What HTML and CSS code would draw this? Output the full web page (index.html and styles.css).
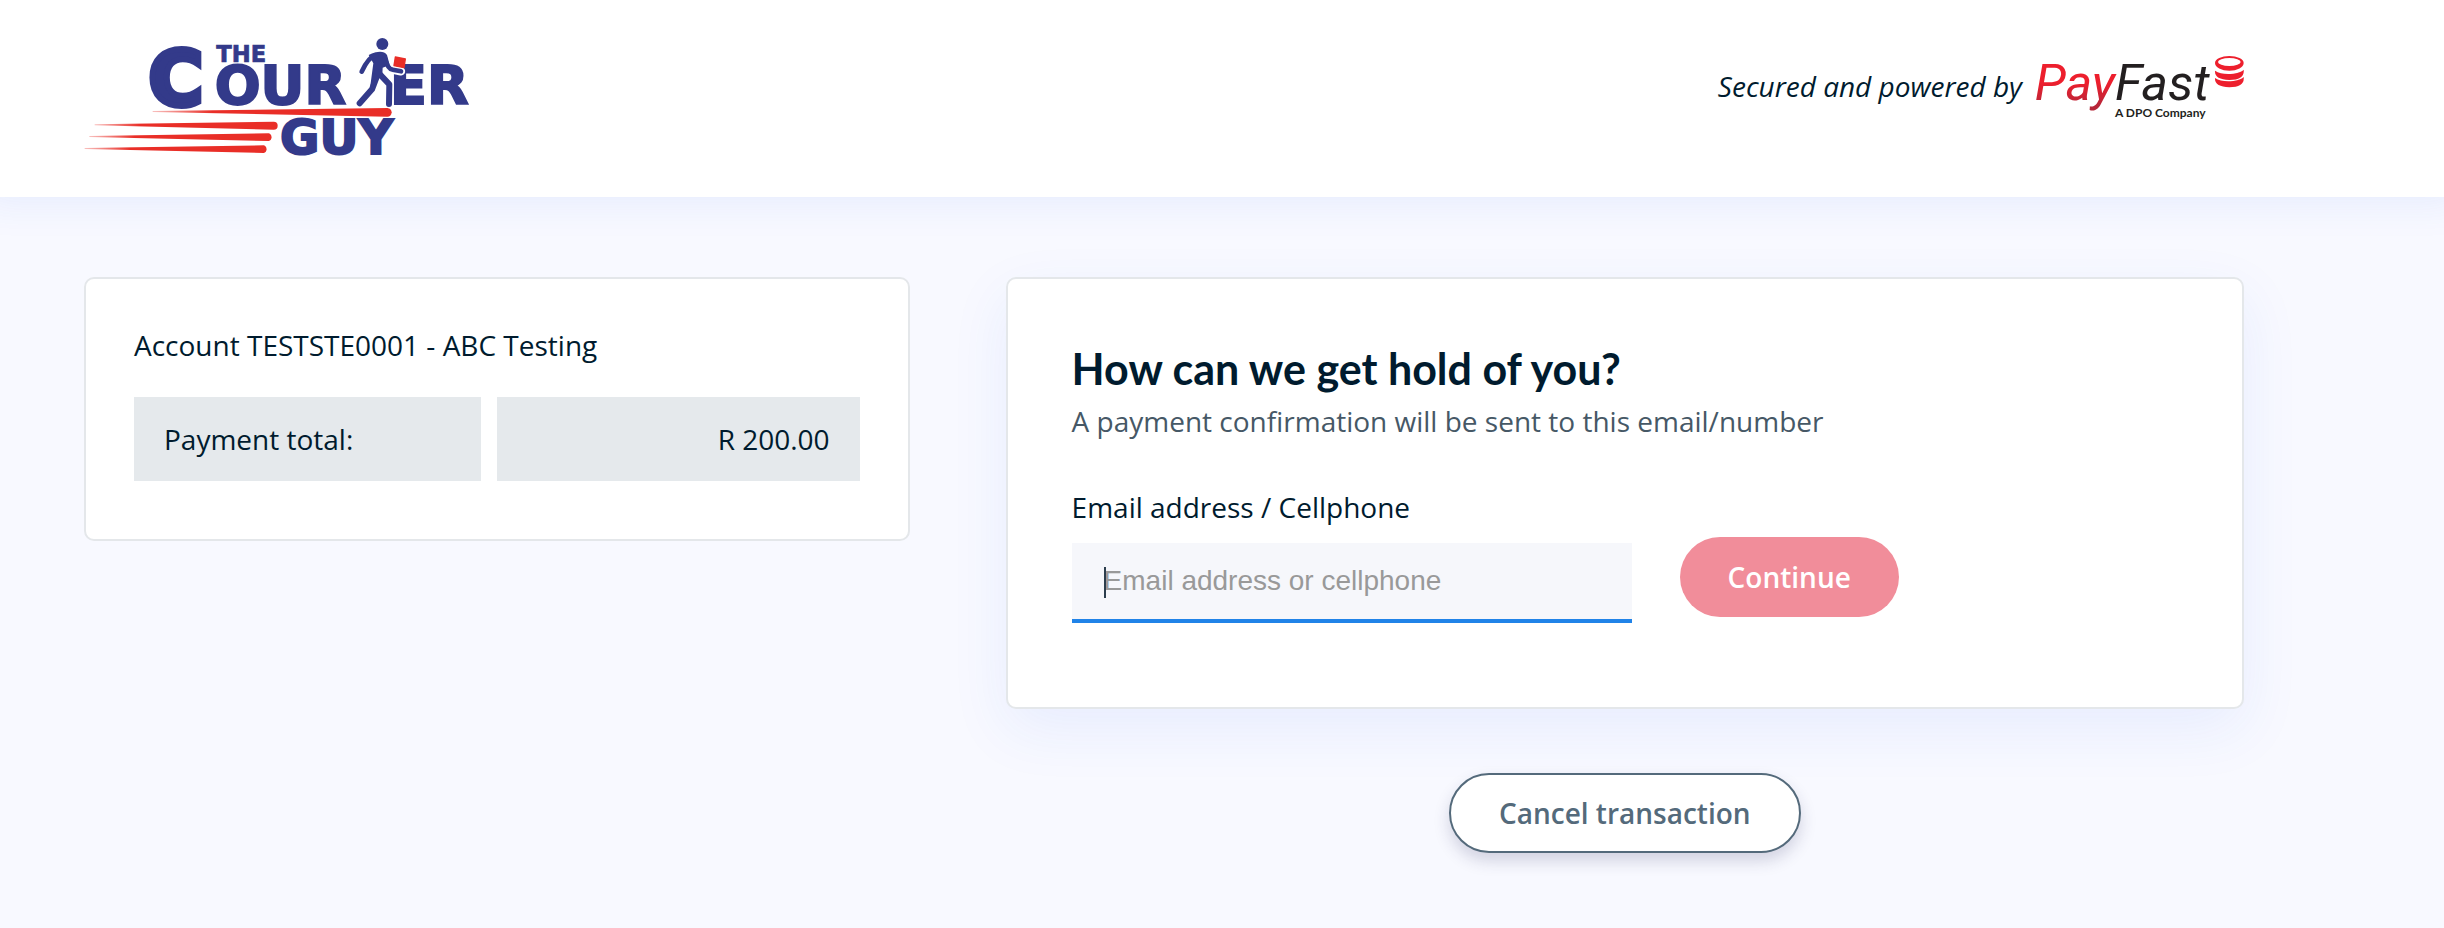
FILE: index.html
```html
<!DOCTYPE html>
<html lang="en">
<head>
<meta charset="utf-8">
<meta name="viewport" content="width=device-width, initial-scale=1">
<title>Payment - The Courier Guy</title>
<link rel="stylesheet" href="styles.css">
</head>
<body>
<header class="site-header">
  <div class="container header-row">
    <svg class="merchant-logo" viewBox="42 42 1176 378" role="img" aria-label="The Courier Guy">
      <defs>
        <linearGradient id="fade" x1="0" x2="1" y1="0" y2="0">
          <stop offset="0" stop-color="#e92e27" stop-opacity="0.3"/>
          <stop offset="0.25" stop-color="#e92e27"/>
        </linearGradient>
      </defs>
      <g class="wordmark">
        <text class="letter-c" x="236" y="254">C</text>
        <text class="letters-the" x="439" y="126">THE</text>
        <text class="letters-main" x="434" y="253">OUR</text>
        <text class="letters-main" x="960" y="253">ER</text>
        <text class="letters-guy" x="630" y="403">GUY</text>
      </g>
      <g fill="url(#fade)">
        <path d="M248 273 L952 264 A13 13 0 0 1 952 290 L248 276Z"/>
        <path d="M74 313 L611 305 A12 12 0 0 1 611 329 L74 316Z"/>
        <path d="M58 348 L596 340 A12 12 0 0 1 596 363 L58 351Z"/>
        <path d="M44 384 L581 376 A12 12 0 0 1 581 399 L44 387Z"/>
      </g>
      <g class="runner-halo">
        <path d="M918 108 Q896 114 875 155"/>
        <path d="M924 160 L904 212 L869 250"/>
        <path d="M922 155 L958 193 L957 252"/>
        <path d="M944 112 Q953 148 968 149 L993 154"/>
      </g>
      <g class="runner">
        <circle cx="937" cy="72" r="18"/>
        <path class="torso" d="M896 105 Q937 86 951 105 L959 135 L938 143 L937 164 L920 184 L900 205 L910 130Z"/>
        <path class="limb" d="M918 105 Q896 110 875 155"/>
        <path class="limb leg" d="M924 160 L906 208 L869 250"/>
        <path class="limb leg" d="M922 155 L958 193 L957 252"/>
        <path class="limb" d="M944 112 Q953 148 968 149 L993 154"/>
      </g>
      <path class="parcel" d="M976 111 L1006 117 L1002 143 L972 137Z"/>
    </svg>
    <div class="powered">
      <span class="powered-text">Secured and powered by</span>
      <svg class="payfast-logo" viewBox="48 30 624 201" role="img" aria-label="PayFast, a DPO Company">
        <defs>
          <linearGradient id="pay" gradientUnits="userSpaceOnUse" x1="0" x2="0" y1="57" y2="197">
            <stop offset="0.4" stop-color="#ed1f2d"/>
            <stop offset="0.9" stop-color="#b62639"/>
          </linearGradient>
        </defs>
        <text class="payfast-name" x="44" y="166"><tspan fill="url(#pay)">Pay</tspan><tspan fill="#231f20">Fast</tspan></text>
        <text class="payfast-sub" x="285" y="217">A DPO Company</text>
        <g fill="#ed1f2d">
          <path fill-rule="evenodd" d="M585 54 a43 21 0 1 1 86 0 a43 23 0 1 1 -86 0Z M594 51 a34 12 0 1 0 68 0 a34 12 0 1 0 -68 0Z"/>
          <path d="M585 77 Q605 90 640 86 Q665 82 671 74 Q675 104 628 105 Q583 103 585 77Z"/>
          <path d="M585 99 Q605 112 640 108 Q665 104 671 96 Q675 126 628 127 Q583 125 585 99Z"/>
        </g>
      </svg>
    </div>
  </div>
</header>
<main class="container columns">
  <section class="card summary">
    <p class="account">Account TESTSTE0001 - ABC Testing</p>
    <dl class="total">
      <dt>Payment total:</dt>
      <dd>R 200.00</dd>
    </dl>
  </section>
  <div class="contact-column">
    <section class="card contact">
      <h1>How can we get hold of you?</h1>
      <p class="hint">A payment confirmation will be sent to this email/number</p>
      <form>
        <label for="contact">Email address / Cellphone</label>
        <div class="field-row">
          <div class="field">
            <input id="contact" type="text" placeholder="Email address or cellphone" autofocus>
            <span class="caret" aria-hidden="true"></span>
          </div>
          <button class="btn btn-primary" type="button">Continue</button>
        </div>
      </form>
    </section>
    <button class="btn btn-outline" type="button">Cancel transaction</button>
  </div>
</main>
</body>
</html>
```
FILE: styles.css
```css
* { box-sizing: border-box; }

body {
  margin: 0;
  min-height: 100vh;
  background: #f8f9ff;
  color: #001b2e;
  font: 28px/40px "Open Sans", sans-serif;
}

h1, p, dl, dd { margin: 0; }

.container {
  max-width: 2444px;
  padding: 0 200px 0 84px;
}

.site-header {
  background: #fff;
  padding: 34px 0 37px;
  box-shadow: 0 -12px 36px 20px rgba(40, 90, 240, 0.08);
}

.header-row {
  display: flex;
  justify-content: space-between;
  align-items: flex-start;
}

.merchant-logo { width: 392px; height: 126px; }

.wordmark { fill: #333a8a; stroke: #333a8a; font-family: "DejaVu Sans", sans-serif; font-weight: 700; }
.letter-c { font-size: 222px; stroke-width: 18px; }
.letters-the { font-size: 68px; stroke-width: 2px; }
.letters-main { font-size: 162px; stroke-width: 6px; }
.letters-guy { font-size: 144px; stroke-width: 6px; }

.runner-halo { fill: none; stroke: #fff; stroke-width: 25px; stroke-linecap: round; stroke-linejoin: round; }
.runner { fill: #333a8a; }
.limb { fill: none; stroke: #333a8a; stroke-width: 14px; stroke-linecap: round; stroke-linejoin: round; }
.leg { stroke-width: 18px; }
.parcel { fill: #e92e27; stroke: #e92e27; stroke-width: 4px; stroke-linejoin: round; }

.powered {
  display: flex;
  align-items: flex-start;
  gap: 14px;
  margin-top: 21px;
}

.powered-text { font-style: italic; line-height: 62px; }
.payfast-logo { width: 208px; height: 67px; }
.payfast-name { font-family: Roboto, sans-serif; font-style: italic; font-weight: 400; font-size: 152px; }
.payfast-sub { font-family: Lato, sans-serif; font-weight: 700; font-size: 36px; fill: #231f20; }

.columns {
  display: grid;
  grid-template-columns: 2fr 3fr;
  gap: 96px;
  align-items: start;
  padding-top: 80px;
  padding-bottom: 64px;
}

.card {
  position: relative;
  background: #fff;
  border: 2px solid #e4e7ea;
  border-radius: 10px;
}

.summary { padding: 46px 48px 58px; }
.account { margin-bottom: 32px; }

.total {
  display: grid;
  grid-template-columns: 22fr 23fr;
  gap: 16px;
}

.total dt, .total dd { padding: 22px 30px; background: #e5e9ec; }
.total dd { text-align: right; }

.contact-column {
  display: flex;
  flex-direction: column;
  gap: 64px;
}

.contact {
  padding: 62px 64px 84px;
  box-shadow: 0 20px 60px rgba(40, 90, 240, 0.08);
}

h1 { margin-bottom: 4px; font: 700 43px/56px Lato, sans-serif; }
.hint { color: #465866; margin-bottom: 46px; }

label { display: block; }

.field-row {
  display: flex;
  align-items: flex-start;
  gap: 48px;
  margin-top: 10px;
}

.field { position: relative; margin-top: 6px; }

input {
  display: block;
  width: 560px;
  height: 80px;
  padding: 0 32px;
  border: 0;
  border-bottom: 4px solid #2083e8;
  border-radius: 0;
  outline: 0;
  background: #f6f7fb;
  color: #001b2e;
  caret-color: transparent;
  font: 28px "Liberation Sans", sans-serif;
}

input::placeholder { color: #999; opacity: 1; }

.caret {
  position: absolute;
  left: 32px;
  top: 24px;
  width: 2px;
  height: 31px;
  background: #2c3e4d;
}

.btn {
  height: 80px;
  border: 0;
  border-radius: 40px;
  padding: 0 48px;
  font: 600 28px "Open Sans", sans-serif;
}

.btn-primary { background: #f18d9a; color: #fff; }

.btn-outline {
  position: relative;
  align-self: center;
  border: 2px solid #546a7b;
  background: #fff;
  color: #546a7b;
  box-shadow: 0 8px 16px rgba(40, 40, 90, 0.18);
}
```
